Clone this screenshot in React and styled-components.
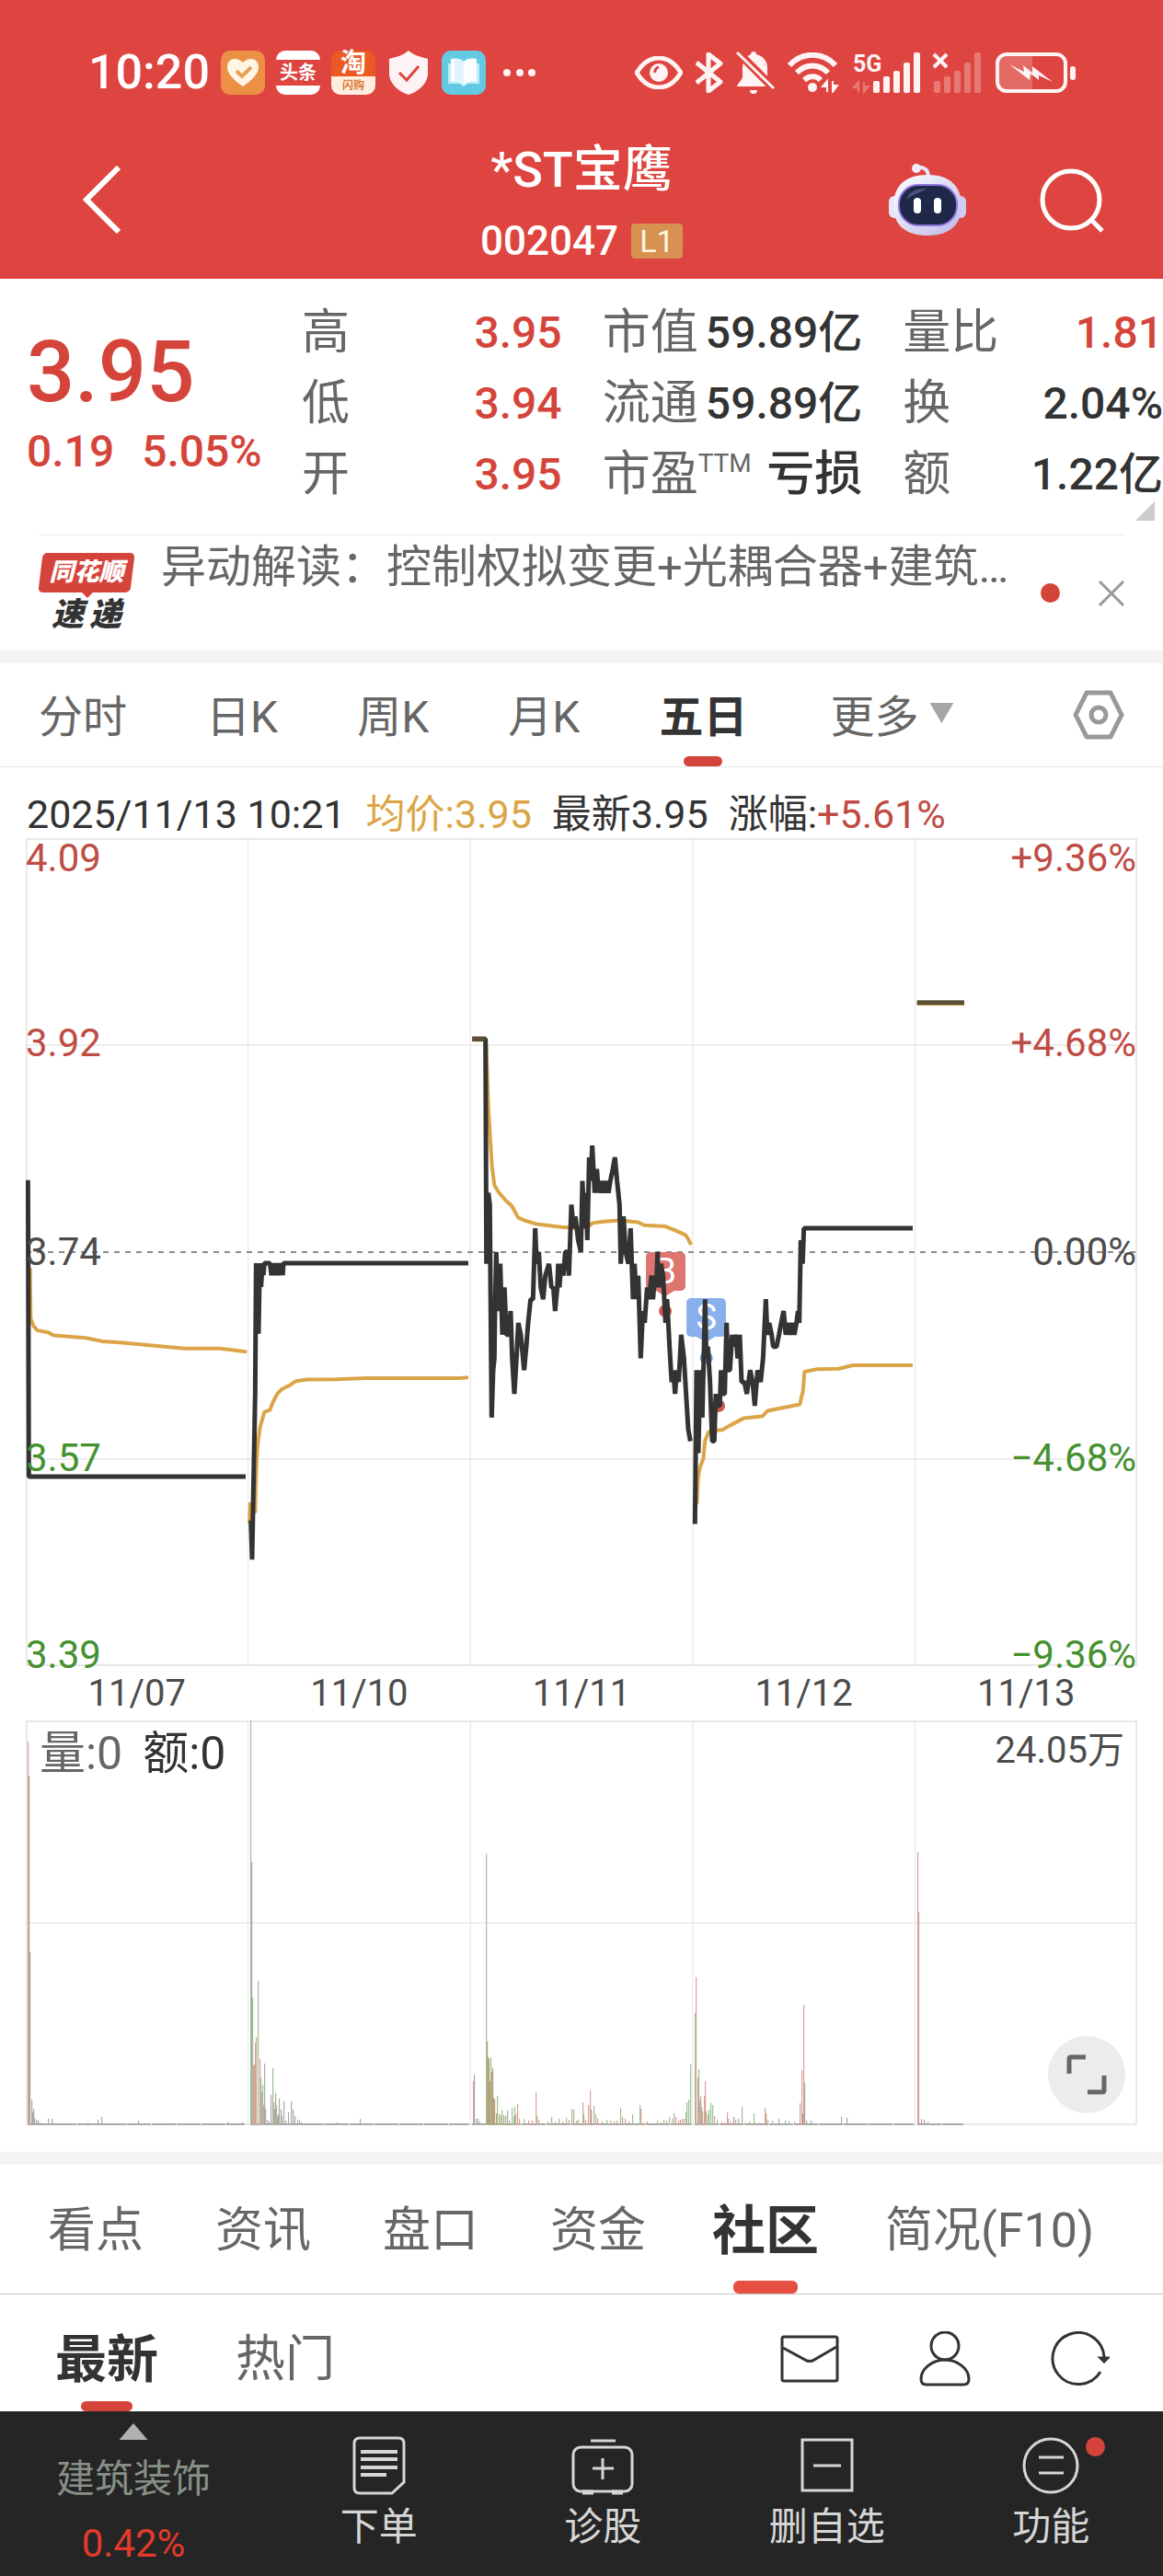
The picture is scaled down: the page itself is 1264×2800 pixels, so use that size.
import React from "react";
import styled, { createGlobalStyle, css } from "styled-components";

const color = {
  header: "#de4540",
  up: "#d5443b",
  upText: "#bf4c44",
  down: "#45912f",
  ink: "#333333",
  mute: "#666666",
  gold: "#dba547",
  band: "#f3f3f3",
  line: "#e4e4e4",
  dock: "#252525",
};

const GlobalStyle = createGlobalStyle`
  *, *::before, *::after { box-sizing: border-box; }
  body {
    margin: 0;
    background: #fff;
    color: ${color.ink};
    font-family: Roboto, "Noto Sans CJK SC", sans-serif;
  }
  button {
    margin: 0;
    padding: 0;
    border: 0;
    background: none;
    color: inherit;
    font: inherit;
    cursor: pointer;
  }
  h1, p, dl, dt, dd { margin: 0; font-weight: inherit; }
  svg { display: block; flex: none; }
`;

const Page = styled.div`
  display: flex;
  flex-direction: column;
  min-width: 0;
`;

/* ---------- header ---------- */

const Header = styled.header`
  background: ${color.header};
  color: #fff;
`;

const StatusBar = styled.div`
  display: flex;
  align-items: center;
  justify-content: space-between;
  padding: 54px 94px 0 96px;
  height: 104px;
`;

const StatusGroup = styled.div`
  display: flex;
  align-items: center;
  gap: ${(p) => p.$gap}px;
`;

const Clock = styled.time`
  font-size: 52px;
  line-height: 52px;
  font-weight: 500;
  width: 132px;
`;

const AppBadge = styled.span`
  display: flex;
  flex-direction: column;
  align-items: center;
  justify-content: center;
  width: 48px;
  height: 48px;
  border-radius: 10px;
  background: ${(p) => p.$bg};
  color: #fff;
  font-size: ${(p) => p.$size || 18}px;
  line-height: 28px;
  font-weight: 700;
`;

const SaleStrip = styled.span`
  align-self: stretch;
  border-radius: 0 0 10px 10px;
  background: #fdeee0;
  color: #e07a35;
  font-size: 12px;
  line-height: 20px;
  text-align: center;
`;

const HeadlineStrip = styled.span`
  align-self: stretch;
  background: ${color.header};
  font-size: 20px;
  text-align: center;
`;

const TitleBar = styled.div`
  display: grid;
  grid-template-columns: 1fr auto 1fr;
  align-items: center;
  height: 199px;
  padding: 26px 64px 0 90px;
`;

const TitleBlock = styled.div`
  display: flex;
  flex-direction: column;
  align-items: center;
  gap: 22px;
  padding: 8px 0 0 26px;
  margin-right: 52px;
`;

const StockName = styled.h1`
  font-size: 54px;
  line-height: 60px;
  font-weight: 500;
`;

const CodeRow = styled.p`
  display: flex;
  align-items: center;
  gap: 14px;
  font-size: 44px;
  line-height: 50px;
  font-weight: 500;
`;

const LevelTag = styled.span`
  width: 56px;
  height: 38px;
  border-radius: 4px;
  background: #d79252;
  color: #fff7e3;
  font-size: 34px;
  line-height: 38px;
  font-weight: 400;
  text-align: center;
`;

const HeaderActions = styled.div`
  display: flex;
  justify-content: flex-end;
  align-items: center;
  gap: 78px;
`;

const IconButton = styled.button`
  display: flex;
  align-items: center;
  justify-content: center;
`;

const BackButton = styled(IconButton)`
  justify-self: start;
`;

/* ---------- quote ---------- */

const Quote = styled.section`
  position: relative;
  display: flex;
`;

const PriceBlock = styled.div`
  flex: none;
  width: 328px;
  padding: 54px 0 0 29px;
  color: ${color.up};
  font-weight: 500;
`;

const Price = styled.p`
  font-size: 92px;
  line-height: 96px;
`;

const Change = styled.p`
  display: flex;
  gap: 30px;
  margin-top: 8px;
  font-size: 48px;
  line-height: 60px;
`;

const Metrics = styled.div`
  flex: 1;
  display: grid;
  grid-template-columns: repeat(3, 1fr);
  column-gap: 44px;
  padding: 20px 0 27px;
`;

const MetricList = styled.dl`
  display: flex;
  flex-direction: column;
`;

const Metric = styled.div`
  display: flex;
  align-items: center;
  justify-content: space-between;
  height: 77px;
  white-space: nowrap;
`;

const MetricLabel = styled.dt`
  display: flex;
  color: ${color.mute};
  font-size: 52px;
  line-height: 60px;
`;

const Superscript = styled.span`
  font-size: 28px;
  line-height: 36px;
`;

const MetricValue = styled.dd`
  color: ${(p) => (p.$up ? color.up : color.ink)};
  font-size: ${(p) => (p.$word ? 52 : 48)}px;
  line-height: 60px;
  font-weight: 500;
`;

const CornerFold = styled.span`
  position: absolute;
  right: 9px;
  bottom: 15px;
  width: 21px;
  height: 21px;
  background: #cccccc;
  clip-path: polygon(100% 0, 100% 100%, 0 100%);
`;

/* ---------- news ---------- */

const News = styled.section`
  display: flex;
  align-items: center;
  height: 126px;
  margin: 0 42px;
  border-top: 1px solid #ececec;
`;

const NewsLogo = styled.div`
  display: flex;
  flex-direction: column;
  align-items: center;
  flex: none;
  width: 104px;
  margin-right: 29px;
  font-style: italic;
  font-weight: 900;
`;

const NewsBrand = styled.span`
  position: relative;
  z-index: 0;
  width: 100px;
  height: 43px;
  color: #fff;
  font-size: 27px;
  line-height: 43px;
  text-align: center;

  &::before {
    content: "";
    position: absolute;
    z-index: -1;
    inset: 0;
    border-radius: 5px;
    background: ${color.up};
    transform: skewX(-7deg);
  }

  &::after {
    content: "";
    position: absolute;
    left: 44px;
    top: 42px;
    border: 7px solid transparent;
    border-top-color: ${color.up};
    border-bottom: 0;
  }
`;

const NewsKind = styled.span`
  display: flex;
  gap: 6px;
  margin-top: 6px;
  font-size: 35px;
  line-height: 38px;
`;

const NewsText = styled.a`
  flex: 1;
  align-self: flex-start;
  min-width: 0;
  margin-top: 5px;
  overflow: hidden;
  color: ${color.mute};
  font-size: 49px;
  line-height: 60px;
  text-decoration: none;
  white-space: nowrap;
`;

const RedDot = styled.span`
  flex: none;
  width: 21px;
  height: 21px;
  border-radius: 50%;
  background: ${color.up};
`;

const NewsClose = styled(IconButton)`
  margin-left: 42px;
`;

const Band = styled.div`
  height: 14px;
  background: ${color.band};
`;

/* ---------- tabs ---------- */

const PeriodTabs = styled.nav`
  display: flex;
  align-items: center;
  gap: 86px;
  height: 113px;
  padding: 0 42px;
  border-bottom: 1px solid #e6e6e6;
`;

const Tab = styled.button`
  position: relative;
  display: flex;
  align-items: center;
  justify-content: center;
  align-self: stretch;
  padding-bottom: 4px;
  color: ${color.mute};
  font-size: 48px;
  white-space: nowrap;

  ${(p) =>
    p.$active &&
    css`
      color: ${color.ink};
      font-weight: 700;

      &::after {
        content: "";
        position: absolute;
        bottom: 0;
        left: 50%;
        width: ${p.$bar}px;
        height: ${p.$thick}px;
        margin-left: -${p.$bar / 2}px;
        border-radius: 6px;
        background: ${p.$tone || color.up};
      }
    `}
`;

const MoreTab = styled(Tab)`
  gap: 12px;
  padding-left: 4px;

  &::after {
    content: "";
    width: 26px;
    height: 22px;
    background: #a6a6a6;
    clip-path: polygon(0 0, 100% 0, 50% 100%);
  }
`;

const PeriodSettings = styled(IconButton)`
  margin-left: auto;
`;

const SectionTabs = styled(PeriodTabs)`
  gap: 78px;
  height: 141px;
  padding: 0 52px;
  border-bottom-color: #c4c4c4;
`;

const SectionTab = styled(Tab)`
  min-width: 104px;
  padding-bottom: 7px;
  font-size: ${(p) => (p.$active ? 58 : 52)}px;
  ${(p) => p.$active && "width: 104px;"}
`;

/* ---------- chart ---------- */

const ChartInfo = styled.p`
  display: flex;
  gap: 22px;
  padding: 24px 29px 0;
  height: 77px;
  font-size: 43px;
  line-height: 54px;
  white-space: nowrap;
`;

const Tint = styled.span`
  color: ${(p) => p.$color};
`;

const Charts = styled.section`
  margin: 0 28px;
`;

const Plot = styled.div`
  position: relative;
  height: ${(p) => p.$height}px;
`;

const Layer = styled.svg`
  position: absolute;
  inset: 0;
  width: 100%;
  height: 100%;
`;

const AxisLabel = styled.span`
  position: absolute;
  ${(p) => (p.$side === "left" ? "left: 0;" : "right: 1px;")}
  top: ${(p) => p.$at}%;
  margin-top: -18px;
  color: ${(p) => p.$color};
  font-size: 42px;
  line-height: 36px;
`;

const Marker = styled.span`
  position: absolute;
  left: ${(p) => p.$x}%;
  top: ${(p) => p.$y}%;
  width: 43px;
  height: 42px;
  margin-left: -21px;
  border-radius: 5px;
  background: ${(p) => p.$color};
  color: #fff;
  font-size: 38px;
  line-height: 42px;
  text-align: center;

  &::after {
    content: "";
    position: absolute;
    left: 11px;
    top: 42px;
    border: 10px solid transparent;
    border-top: 6px solid ${(p) => p.$color};
    border-bottom: 0;
  }
`;

const Dates = styled.div`
  display: grid;
  grid-template-columns: repeat(5, 1fr);
  height: 59px;
  padding-top: 8px;
  color: #4c4c4c;
  font-size: 40px;
  line-height: 44px;
  text-align: center;
`;

const VolumeInfo = styled.p`
  position: absolute;
  inset: 6px 14px auto 15px;
  display: flex;
  align-items: center;
  gap: 22px;
  font-size: 50px;
  line-height: 60px;
`;

const VolumeMax = styled.span`
  align-self: flex-start;
  margin-left: auto;
  color: #4c4c4c;
  font-size: 40px;
  line-height: 54px;
`;

const ExpandButton = styled(IconButton)`
  position: absolute;
  right: 13px;
  bottom: 13px;
  width: 84px;
  height: 84px;
  border-radius: 50%;
  background: #ececec;
`;

const ChartFoot = styled.div`
  height: 29px;
`;

/* ---------- community ---------- */

const FeedBar = styled.nav`
  display: flex;
  align-items: center;
  height: 127px;
  padding: 0 58px 0 60px;
  overflow: hidden;
`;

const FeedTab = styled(Tab)`
  margin-right: 84px;
  padding: 4px 0 0;
  font-size: ${(p) => (p.$active ? 56 : 54)}px;
`;

const FeedActions = styled.div`
  display: flex;
  gap: 83px;
  margin-left: auto;
  padding-top: 12px;
`;

/* ---------- dock ---------- */

const Dock = styled.nav`
  display: grid;
  grid-template-columns: 290px repeat(4, 1fr);
  height: 179px;
  background: ${color.dock};
  color: #d6d6d6;
`;

const DockItem = styled.button`
  display: flex;
  flex-direction: column;
  align-items: center;
  gap: 5px;
  padding-top: 27px;
  font-size: 42px;
  line-height: 60px;
`;

const DockIcon = styled.span`
  position: relative;
  display: flex;
  align-items: center;
  justify-content: center;
  width: 66px;
  height: 64px;
`;

const DockDot = styled(RedDot)`
  position: absolute;
  left: 71px;
  top: 1px;
`;

const Sector = styled(DockItem)`
  gap: 16px;
  padding-top: 13px;
  color: #879086;
  line-height: 54px;

  &::before {
    content: "";
    width: 31px;
    height: 18px;
    background: #b0b0b0;
    clip-path: polygon(50% 0, 100% 100%, 0 100%);
  }
`;

/* ---------- chart data ---------- */

// One price tick (0.01) is 31.5 plot units; level 0 is the previous close.
const PLOT_W = 3624;
const PLOT_H = 2205;
const MID = 1102;
const TICK = 31.5;

const dayThree = [
  [40, 18], [83, 18], [86, -1], [92, 5], [97, 4], [103, -14], [108, -10], [112, -9], [114, -5], [118, 0],
  [124, -5], [131, -1], [138, -7], [145, -3], [151, -7], [158, -7], [165, -5], [170, -9], [177, -12], [184, -9],
  [190, -6], [198, -7], [209, -10], [216, -8], [222, -6], [230, -4], [238, -4], [245, 2], [250, -1], [257, 0],
  [263, -3], [271, -4], [278, -2], [290, -1], [298, -3], [304, -3], [310, -5], [317, -3], [320, -1], [324, -3],
  [330, -1], [337, -2], [343, 0], [350, 0], [355, -2], [363, 4], [370, 2], [376, 3], [385, 1], [394, 0],
  [399, 6], [406, 2], [411, 5], [415, 1], [421, 8], [426, 6], [431, 9], [439, 5], [446, 7], [452, 5],
  [456, 6], [462, 5], [467, 6], [472, 5], [478, 6], [484, 5], [490, 6], [498, 7], [505, 8], [512, 6],
  [520, 4], [524, -1], [533, 3], [540, 0], [549, -1], [556, 2], [564, -4], [569, -1], [575, -4], [581, -2],
  [589, -9], [596, -5], [602, -6], [610, -3], [617, -4], [624, -2], [629, -4], [635, -2], [640, -3], [644, 0],
  [649, -3], [655, -1], [662, -2], [670, -6], [675, -4], [683, -8], [690, -11], [695, -10], [701, -12], [707, -10],
  [713, -11], [721, -7], [730, -9], [737, -12], [744, -15], [751, -16],
];

const dayFour = [
  [766, -23], [771, -10], [777, -17], [783, -10], [790, -14], [799, -4], [803, -9], [808, -8], [815, -11], [822, -16],
  [829, -16], [834, -12], [840, -13], [847, -13], [851, -10], [858, -12], [863, -12], [869, -6], [874, -10], [880, -10],
  [887, -7], [893, -8], [899, -7], [905, -9], [912, -7], [918, -11], [927, -11], [935, -12], [946, -10], [954, -11],
  [961, -13], [970, -10], [980, -11], [988, -9], [997, -4], [1002, -7], [1008, -6], [1016, -7], [1021, -8], [1032, -8],
  [1040, -7], [1047, -6], [1055, -5], [1062, -7], [1069, -6], [1076, -7], [1083, -6], [1090, -7], [1097, -6], [1102, -5],
  [1106, -6], [1111, 1], [1117, -1], [1121, 2], [1476, 2],
];

const toPoints = (list) => list.map(([x, level]) => `${x + 1416},${MID - level * TICK}`).join(" ");

const priceLines = [
  "7,911 8,1102 9,1400 10,1700 717,1700",
  "734,1817 738,1921 748,1479 751,1132 759,1320 763,1132 767,1195 772,1132 775,1164 778,1132 796,1132 801,1164 805,1132 811,1164 815,1132 821,1164 826,1132 832,1164 836,1132 838,1164 840,1132 1443,1132",
  toPoints(dayThree),
  toPoints(dayFour),
];

const averageLines = [
  "14,1145 16,1280 26,1300 38,1311 71,1316 91,1324 196,1331 251,1340 316,1344 516,1359 631,1359 721,1368",
  "729,1824 732,1770 748,1797 752,1670 756,1616 764,1569 778,1528 796,1523 806,1502 821,1479 836,1467 861,1457 881,1446 916,1442 1016,1441 1106,1438 1416,1438 1443,1436",
  "1456,537 1499,537 1502,564 1508,714 1514,794 1520,874 1528,924 1541,942 1566,966 1584,979 1606,1011 1626,1018 1666,1028 1746,1036 1796,1038 1831,1036 1848,1025 1886,1021 1936,1018 1996,1023 2016,1031 2086,1034 2116,1044 2151,1057 2161,1069 2169,1083",
  "2188,1774 2192,1704 2198,1676 2209,1654 2215,1604 2226,1582 2241,1578 2271,1576 2296,1564 2341,1545 2401,1540 2419,1525 2456,1519 2524,1508 2529,1489 2534,1474 2539,1421 2581,1414 2651,1413 2696,1404 2892,1404",
  "2906,441 3060,441",
];

const barColor = { r: "#d8a19d", g: "#9cc294", k: "#a9a9a9", b: "#b7a27d" };

const volumeBars = `
2r417 3b380 4k188 6k28 7k14 8k18 9k8 11k6 13k5 15k3 24k7 28k7 67k3 78k6 82k9 122k5 219k4 235k3
244g440 245k286 246g139 247r65 248r66 249r90 250r96 252g157 254r72 255g52 256r36 257g44 258r22 259k67 260k18 262k6 264k4
266k33 268g62 269r25 270k18 271k35 272g22 273k10 274k12 275k29 277k17 278r10 280k26 282k5 285k14 288k26 290k17 292k10 295k6 297k5 299k3 338k3 363k7
486r48 487k55 489k7 491k7 493k4 500g295 501b91 502b74 503b72 504b48 505g74 506b58 507b62 508b30 509b28 511b13 512g32 514b12 516g11 517g16 519b11 521g10 523k16
525r5 528g19 530g10 531g20 532r12 534r23 536r7 541g7 546r5 550r5 554r36 555g10 557r6 567r4 571g9 575r4 579g7 583r4 587g8 590r6 593r18 595g17 598r5 600g6
605r25 606g12 608r6 611r22 613r38 614b17 617g21 619r12 621r7 626r4 631g6 635r5 639g4 642r5 646g19 648r9 651r7 655r4 659g12 667g22 668r18 672r3 675r4 686g5 690r3 693g6 696r5
699g9 702r7 704g13 706r9 709r5 711r6 713r7 715r7 717g14 718g25 720g28 722g66
727g122 728r161 730r52 731g61 732r27 733r32 734g20 735r15 737r32 738r48 739g15 741r12 742g17 744g24 746g22 748r10 751g6 756r4 759r3 762r14 763g7 766r4 769k9 771r6 774k7 778g20 782r3
786r4 791g13 797r3 803r19 804b13 806r6 811g5 818k7 825k5 829g4 835r4 841r24 843r60 844b13 845r131 846k46 848k5 853k5 886k9 892k8
969r297 970r232 973k7 976k6 980k4`
  .trim()
  .split(/\s+/)
  .map((entry) => {
    const [, x, kind, height] = entry.match(/^(\d+)([rgkb])(\d+)$/);
    return { x: Number(x), kind, height: Number(height) };
  });

const floorSpans = [[2, 238], [244, 482], [485, 723], [727, 965], [969, 1019]];

const axis = [
  { at: 2.4, price: "4.09", pct: "+9.36%", tone: color.upText },
  { at: 24.8, price: "3.92", pct: "+4.68%", tone: color.upText },
  { at: 50, price: "3.74", pct: "0.00%", tone: "#4c4c4c" },
  { at: 74.9, price: "3.57", pct: "-4.68%", tone: color.down },
  { at: 98.7, price: "3.39", pct: "-9.36%", tone: color.down },
];

const metrics = [
  [
    { label: "高", value: "3.95", up: true },
    { label: "低", value: "3.94", up: true },
    { label: "开", value: "3.95", up: true },
  ],
  [
    { label: "市值", value: "59.89亿" },
    { label: "流通", value: "59.89亿" },
    { label: "市盈", sup: "TTM", value: "亏损", word: true },
  ],
  [
    { label: "量比", value: "1.81", up: true },
    { label: "换", value: "2.04%" },
    { label: "额", value: "1.22亿" },
  ],
];

/* ---------- drawings ---------- */

const BackIcon = () => (
  <svg width="42" height="74" viewBox="0 0 42 74" fill="none" stroke="#fff" strokeWidth="6">
    <path d="M39 2L4 37l35 35" />
  </svg>
);

const ShieldIcon = () => (
  <svg width="48" height="48" viewBox="0 0 48 48">
    <path d="M24 0C31 6 38 7 45 9v16c0 11-11 20-21 23C14 45 3 36 3 25V9c7-2 14-3 21-9z" fill="#fdf3f4" />
    <path d="M14 24l8 8 13-15" fill="none" stroke={color.header} strokeWidth="3" />
  </svg>
);

const EyeIcon = () => (
  <svg width="52" height="36" viewBox="0 0 52 36" fill="none" stroke="#fff3f3">
    <path d="M2 18C8 8 16 2 26 2s18 6 24 16c-6 10-14 16-24 16S8 28 2 18z" strokeWidth="5" />
    <circle cx="26" cy="18" r="10" fill="#fff3f3" stroke="none" />
    <path d="M22 18a5 5 0 0 1 4-6" stroke={color.header} strokeWidth="3" />
  </svg>
);

const BluetoothIcon = () => (
  <svg width="30" height="44" viewBox="0 0 30 44" fill="none" stroke="#fff3f3" strokeWidth="5" strokeLinejoin="round">
    <path d="M1 11l26 21-13 10V2l13 10L1 33" />
  </svg>
);

const BellOffIcon = () => (
  <svg width="42" height="48" viewBox="0 0 42 48">
    <path d="M19 1a3 3 0 0 1 3 3c8 2 12 8 12 15v10c0 4 4 6 5 10H1c1-4 6-7 6-11V19C7 11 11 6 16 4a3 3 0 0 1 3-3zM15 43h8a4 4 0 0 1-8 0z" fill="#fff3f3" />
    <path d="M1 1l40 40" stroke={color.header} strokeWidth="9" />
    <path d="M1 2l40 39" stroke="#fff3f3" strokeWidth="3" />
  </svg>
);

const WifiIcon = () => (
  <svg width="56" height="44" viewBox="0 0 56 44">
    <g fill="none" stroke="#fff3f3" strokeWidth="6">
      <path d="M2 14c14-15 36-15 50 0" />
      <path d="M10 22c10-10 24-10 34 0" />
      <path d="M18 30c6-5 13-5 18 0" />
    </g>
    <circle cx="27" cy="38" r="5" fill="#fff3f3" />
    <path d="M43 43V31l-5 6h5M49 31v12l5-7h-5" fill="#fff3f3" stroke="#fff3f3" strokeWidth="2" />
  </svg>
);

const Bars = ({ x, opacity }) => (
  <g fill="#fff3f3" opacity={opacity}>
    {[13, 18, 24, 33, 44].map((h, i) => (
      <rect key={h} x={x + i * 11} y={44 - h} width="7" height={h} rx="2" />
    ))}
  </g>
);

const SignalSvg = styled.svg`
  overflow: visible;
`;

const SignalText = styled.text`
  font-family: Roboto, sans-serif;
  font-size: 25px;
  font-weight: 700;
`;

const SignalIcon = () => (
  <SignalSvg width="142" height="44" viewBox="0 0 142 44">
    <SignalText x="1" y="21" fill="#fff3f3">5G</SignalText>
    <path d="M7 43V32l-5 6h5M13 32v11l5-6h-5" fill="#fff3f3" stroke="#fff3f3" strokeWidth="2" opacity="0.3" />
    <Bars x={23} opacity={1} />
    <path d="M89 2l14 14M103 2L89 16" stroke="#fff3f3" strokeWidth="4" />
    <Bars x={89} opacity={0.3} />
  </SignalSvg>
);

const BatteryIcon = () => (
  <svg width="88" height="44" viewBox="0 0 88 44">
    <rect x="4" y="4" width="36" height="36" fill="#fff" opacity="0.2" />
    <rect x="2" y="2" width="74" height="40" rx="10" fill="none" stroke="#fff3f3" strokeWidth="4" />
    <rect x="81" y="15" width="6" height="15" rx="3" fill="#fff3f3" />
    <path d="M15 13l16 8-1-7 10 8 0-7 22 17-15-7v5l-9-7-1 7z" fill="#fff3f3" />
  </svg>
);

const RobotIcon = () => (
  <svg width="84" height="80" viewBox="0 0 84 80">
    <defs>
      <linearGradient id="shell" x1="0" y1="0" x2="1" y2="1">
        <stop offset="0" stopColor="#ffffff" />
        <stop offset="1" stopColor="#bcb9ea" />
      </linearGradient>
    </defs>
    <path d="M31 5c8-1 12 3 12 10" fill="none" stroke="#e9e6fb" strokeWidth="4" />
    <circle cx="30" cy="6" r="5" fill="#f0eefc" />
    <rect x="0" y="36" width="14" height="24" rx="6" fill="#e6e6fa" />
    <rect x="70" y="36" width="14" height="24" rx="6" fill="#cfcdf3" />
    <path d="M42 13c24 0 37 12 37 34S64 79 42 79 5 69 5 47s13-34 37-34z" fill="url(#shell)" />
    <rect x="11" y="24" width="63" height="44" rx="21" fill="#1f2849" stroke="#8d74e0" strokeWidth="2" />
    <path d="M19 40c3-9 10-12 22-12-7 5-15 6-22 12z" fill="#4a5375" />
    <rect x="27" y="38" width="8" height="17" rx="4" fill="#fff" />
    <rect x="49" y="38" width="8" height="17" rx="4" fill="#fff" />
  </svg>
);

const MailIcon = () => (
  <svg width="64" height="60" viewBox="0 0 64 60" fill="none" stroke="#333" strokeWidth="3">
    <rect x="2" y="6" width="60" height="48" rx="2" />
    <path d="M3 18l26 14q3 1 6 0l26-15" />
  </svg>
);

const PersonIcon = () => (
  <svg width="64" height="60" viewBox="0 0 64 60" fill="none" stroke="#333" strokeWidth="3">
    <circle cx="32" cy="16" r="15" />
    <path d="M32 31c14 0 26 10 26 21q0 6-6 6H12q-6 0-6-6c0-11 12-21 26-21z" />
  </svg>
);

const RefreshIcon = () => (
  <svg width="64" height="60" viewBox="0 0 64 60" fill="none" stroke="#333" strokeWidth="3">
    <path d="M54 44A28 28 0 1 1 58 28" />
    <path d="M54 29h8l-4 4z" fill="#333" />
  </svg>
);

const OrderIcon = () => (
  <svg width="58" height="64" viewBox="0 0 58 64" fill="none" stroke="#d6d6d6" strokeWidth="3">
    <path d="M8 2h42q6 0 6 6v42L43 62H8q-6 0-6-6V8q0-6 6-6z" />
    <path d="M9 17h40M9 25h40M9 34h40M9 42h28" strokeWidth="4" />
  </svg>
);

const ClinicIcon = () => (
  <svg width="68" height="64" viewBox="0 0 68 64" fill="none" stroke="#d6d6d6" strokeWidth="3">
    <rect x="2" y="12" width="64" height="48" rx="8" />
    <path d="M21 5h27M34 24v23M23 35h23" />
    <path d="M12 61h12M44 61h12" strokeWidth="5" />
  </svg>
);

const RemoveIcon = () => (
  <svg width="58" height="60" viewBox="0 0 58 60" fill="none" stroke="#d6d6d6" strokeWidth="3">
    <rect x="2" y="2" width="54" height="55" />
    <path d="M14 30h30" />
  </svg>
);

const FeatureIcon = () => (
  <svg width="62" height="62" viewBox="0 0 62 62" fill="none" stroke="#d6d6d6" strokeWidth="3">
    <circle cx="31" cy="31" r="29" />
    <path d="M18 22h27M18 39h27" />
  </svg>
);

const PlotGrid = ({ width, height, rows, dashed }) => (
  <>
    <rect width={width} height={height} fill="none" stroke="#e9e9e9" strokeWidth="4" vectorEffect="non-scaling-stroke" />
    {[1, 2, 3, 4].map((i) => (
      <path key={i} d={`M${(width * i) / 5} 0V${height}`} stroke={color.line} strokeWidth="1" vectorEffect="non-scaling-stroke" />
    ))}
    {rows.map((r) => (
      <path key={r} d={`M0 ${height * r}H${width}`} stroke="#dcdcdc" strokeWidth="1" vectorEffect="non-scaling-stroke" />
    ))}
    {dashed && (
      <path d={`M0 ${height / 2}H${width}`} stroke="#8c8c8c" strokeWidth="2" strokeDasharray="6 6" vectorEffect="non-scaling-stroke" />
    )}
  </>
);

const PriceChart = () => (
  <Plot $height={900}>
    <Layer viewBox={`0 0 ${PLOT_W} ${PLOT_H}`} preserveAspectRatio="none">
      <PlotGrid width={PLOT_W} height={PLOT_H} rows={[0.25, 0.75]} dashed />
      <ellipse cx="2085" cy="1259" rx="21" ry="17" fill="#cd5852" />
      <ellipse cx="2219" cy="1384" rx="21" ry="17" fill="#6f9be0" />
      <ellipse cx="2259" cy="1512" rx="21" ry="17" fill="#cd5852" />
    </Layer>
    <Marker $x={57.5} $y={50} $color="#dd7570">B</Marker>
    <Marker $x={61.2} $y={55.6} $color="#8ab0ec">S</Marker>
    <Layer viewBox={`0 0 ${PLOT_W} ${PLOT_H}`} preserveAspectRatio="none" fill="none" strokeLinejoin="bevel">
      {averageLines.map((points) => (
        <polyline key={points} points={points} stroke={color.gold} strokeWidth="4" vectorEffect="non-scaling-stroke" />
      ))}
      {priceLines.map((points) => (
        <polyline key={points} points={points} stroke={color.ink} strokeWidth="5" vectorEffect="non-scaling-stroke" />
      ))}
      <path d="M1456 535H1499M2906 438H3060" stroke="#5b4f35" strokeWidth="5" vectorEffect="non-scaling-stroke" />
    </Layer>
    {axis.map((row) => (
      <React.Fragment key={row.at}>
        <AxisLabel $side="left" $at={row.at} $color={row.tone}>{row.price}</AxisLabel>
        <AxisLabel $side="right" $at={row.at} $color={row.tone}>{row.pct.replace("-", "−")}</AxisLabel>
      </React.Fragment>
    ))}
  </Plot>
);

const VolumeChart = () => (
  <Plot $height={440}>
    <Layer viewBox="0 0 1208 440" preserveAspectRatio="none">
      <PlotGrid width={1208} height={440} rows={[0.5]} />
      {floorSpans.map(([from, to]) => (
        <path key={from} d={`M${from} 439H${to}`} stroke="#a9a9a9" strokeWidth="2" strokeDasharray="26 1" />
      ))}
      {volumeBars.map((bar) => (
        <rect key={bar.x} x={bar.x} y={440 - bar.height} width="1.2" height={bar.height} fill={barColor[bar.kind]} />
      ))}
    </Layer>
    <VolumeInfo>
      <Tint $color={color.mute}>量:0</Tint>
      <span>额:0</span>
      <VolumeMax>24.05万</VolumeMax>
    </VolumeInfo>
    <ExpandButton aria-label="全屏">
      <svg width="46" height="46" viewBox="0 0 46 46" fill="none" stroke="#666" strokeWidth="5">
        <path d="M4 22V6q0-2 2-2h16M42 24v16q0 2-2 2H24" />
      </svg>
    </ExpandButton>
  </Plot>
);

export default function App() {
  return (
    <Page>
      <GlobalStyle />
      <Header>
        <StatusBar>
          <StatusGroup $gap={12}>
            <Clock>10:20</Clock>
            <AppBadge $bg="#ec9046">
              <svg width="36" height="32" viewBox="0 0 36 32">
                <path d="M18 31C8 24 1 17 1 10 1 4 5 1 9 1c4 0 7 2 9 4 2-2 5-4 9-4s8 3 8 9c0 7-7 14-17 21z" fill="#fff6e4" />
                <path d="M11 14l6 6 10-10" fill="none" stroke="#e9a05a" strokeWidth="4" />
              </svg>
            </AppBadge>
            <AppBadge $bg="#fff">
              <HeadlineStrip>头条</HeadlineStrip>
            </AppBadge>
            <AppBadge $bg="#ea5a24" $size={28}>
              淘<SaleStrip>闪购</SaleStrip>
            </AppBadge>
            <ShieldIcon />
            <AppBadge $bg="#62cbe3">
              <svg width="36" height="32" viewBox="0 0 36 32">
                <path d="M1 6h34v22H22l-4 3-4-3H1z" fill="#bdeaf4" />
                <path d="M18 4C14 0 9 0 4 1v25c5-1 10-1 14 4 4-5 9-5 14-4V1c-5-1-10-1-14 3z" fill="#fafeff" />
                <path d="M18 4v26C14 26 11 25 8 26V1c4-1 7 0 10 3z" fill="#dff4fa" />
              </svg>
            </AppBadge>
            <svg width="46" height="8" viewBox="0 0 46 8" fill="#fff3f3">
              <circle cx="11" cy="4" r="4" />
              <circle cx="25" cy="4" r="4" />
              <circle cx="38" cy="4" r="4" />
            </svg>
          </StatusGroup>
          <StatusGroup $gap={14}>
            <EyeIcon />
            <BluetoothIcon />
            <BellOffIcon />
            <WifiIcon />
            <SignalIcon />
            <BatteryIcon />
          </StatusGroup>
        </StatusBar>
        <TitleBar>
          <BackButton aria-label="返回"><BackIcon /></BackButton>
          <TitleBlock>
            <StockName>*ST宝鹰</StockName>
            <CodeRow>
              002047<LevelTag>L1</LevelTag>
            </CodeRow>
          </TitleBlock>
          <HeaderActions>
            <IconButton aria-label="智能助手"><RobotIcon /></IconButton>
            <IconButton aria-label="搜索">
              <svg width="72" height="72" viewBox="0 0 72 72" fill="none" stroke="#fff" strokeWidth="5">
                <circle cx="36" cy="36" r="31" />
                <path d="M58 58l12 12" />
              </svg>
            </IconButton>
          </HeaderActions>
        </TitleBar>
      </Header>

      <main>
        <Quote>
          <PriceBlock>
            <Price>3.95</Price>
            <Change>
              <span>0.19</span>
              <span>5.05%</span>
            </Change>
          </PriceBlock>
          <Metrics>
            {metrics.map((column) => (
              <MetricList key={column[0].label}>
                {column.map((m) => (
                  <Metric key={m.label}>
                    <MetricLabel>
                      {m.label}
                      {m.sup && <Superscript>{m.sup}</Superscript>}
                    </MetricLabel>
                    <MetricValue $up={m.up} $word={m.word}>{m.value}</MetricValue>
                  </Metric>
                ))}
              </MetricList>
            ))}
          </Metrics>
          <CornerFold />
        </Quote>

        <News>
          <NewsLogo>
            <NewsBrand>同花顺</NewsBrand>
            <NewsKind>
              <span>速</span>
              <span>递</span>
            </NewsKind>
          </NewsLogo>
          <NewsText href="#news">异动解读：控制权拟变更+光耦合器+建筑…</NewsText>
          <RedDot />
          <NewsClose aria-label="关闭">
            <svg width="28" height="28" viewBox="0 0 28 28" stroke="#999" strokeWidth="3">
              <path d="M1 1l26 26M27 1L1 27" />
            </svg>
          </NewsClose>
        </News>
        <Band />

        <PeriodTabs>
          <Tab>分时</Tab>
          <Tab>日K</Tab>
          <Tab>周K</Tab>
          <Tab>月K</Tab>
          <Tab $active $bar={42} $thick={11}>五日</Tab>
          <MoreTab>更多</MoreTab>
          <PeriodSettings aria-label="设置">
            <svg width="56" height="54" viewBox="0 0 56 54" fill="none" stroke="#999" strokeWidth="5" strokeLinejoin="round">
              <path d="M15 3h26l12 24-12 24H15L3 27z" />
              <circle cx="28" cy="27" r="8" />
            </svg>
          </PeriodSettings>
        </PeriodTabs>

        <ChartInfo>
          <span>2025/11/13 10:21</span>
          <Tint $color={color.gold}>均价:3.95</Tint>
          <span>最新3.95</span>
          <span>
            涨幅:<Tint $color={color.upText}>+5.61%</Tint>
          </span>
        </ChartInfo>
        <Charts>
          <PriceChart />
          <Dates>
            <span>11/07</span>
            <span>11/10</span>
            <span>11/11</span>
            <span>11/12</span>
            <span>11/13</span>
          </Dates>
          <VolumeChart />
        </Charts>
        <ChartFoot />
        <Band />

        <SectionTabs>
          <SectionTab>看点</SectionTab>
          <SectionTab>资讯</SectionTab>
          <SectionTab>盘口</SectionTab>
          <SectionTab>资金</SectionTab>
          <SectionTab $active $bar={70} $thick={14} $tone="#e64f41">社区</SectionTab>
          <SectionTab>简况(F10)</SectionTab>
        </SectionTabs>
        <FeedBar>
          <FeedTab $active $bar={56} $thick={11}>最新</FeedTab>
          <FeedTab>热门</FeedTab>
          <FeedActions>
            <IconButton aria-label="消息"><MailIcon /></IconButton>
            <IconButton aria-label="我的"><PersonIcon /></IconButton>
            <IconButton aria-label="刷新"><RefreshIcon /></IconButton>
          </FeedActions>
        </FeedBar>
      </main>

      <Dock>
        <Sector>
          <span>建筑装饰</span>
          <Tint $color="#e23b2b">0.42%</Tint>
        </Sector>
        <DockItem>
          <DockIcon><OrderIcon /></DockIcon>
          下单
        </DockItem>
        <DockItem>
          <DockIcon><ClinicIcon /></DockIcon>
          诊股
        </DockItem>
        <DockItem>
          <DockIcon><RemoveIcon /></DockIcon>
          删自选
        </DockItem>
        <DockItem>
          <DockIcon>
            <FeatureIcon />
            <DockDot />
          </DockIcon>
          功能
        </DockItem>
      </Dock>
    </Page>
  );
}
